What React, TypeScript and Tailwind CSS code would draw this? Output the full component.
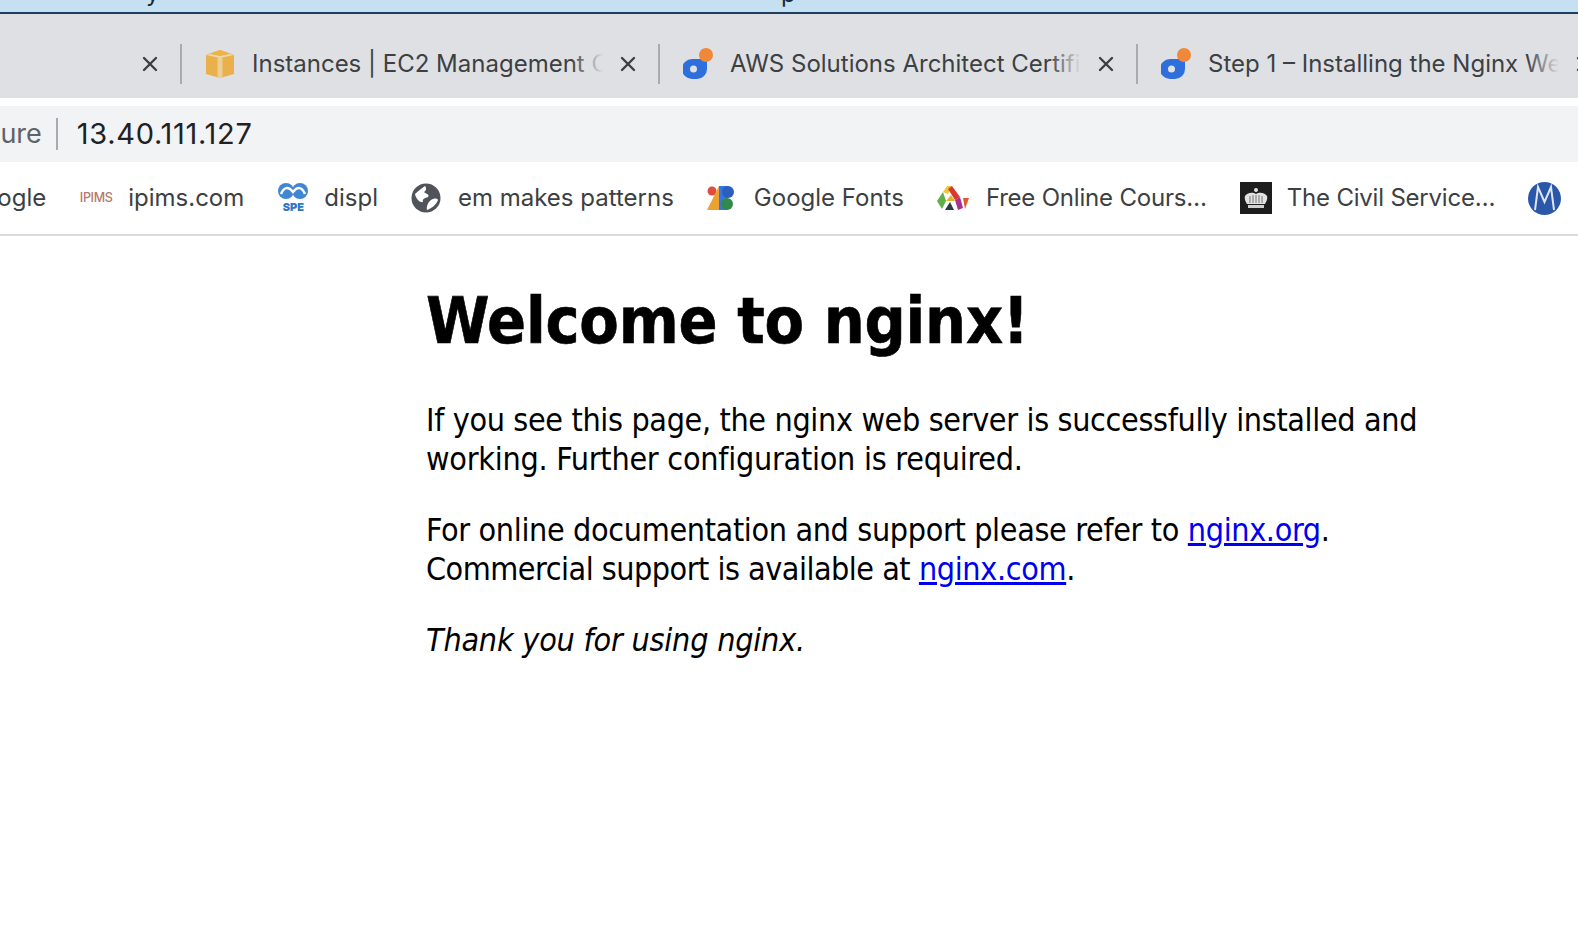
import { X } from "lucide-react";
import type { ReactNode } from "react";

const chrome = "font-['Inter','Liberation_Sans',sans-serif]";

function CubeIcon() {
  return (
    <svg width="30" height="30" viewBox="0 0 30 30">
      <path d="M1 6 L9 3 L15 1 L21 3 L29 6 L29 25 L15 29 L1 25 Z" fill="#e9b04c" />
      <path d="M1 6 L15 9 L29 6 L25 5 L15 7 L5 5 Z" fill="#efd9a8" />
      <path d="M12.5 9 H17.5 V29 H12.5 Z" fill="#eccf95" />
      <path d="M7 4 L15 1 L23 4 L15 6 Z" fill="#eeb546" />
    </svg>
  );
}

function DoIcon() {
  return (
    <svg width="32" height="32" viewBox="1 0 32 32">
      <path d="M10 11 H25 V21 A10 10 0 0 1 15 31 H10 A10 10 0 0 1 10 11 Z" fill="#2f6fdc" />
      <circle cx="11.5" cy="21" r="3.5" fill="#e0e1e5" />
      <circle cx="24" cy="7" r="7" fill="#f0883a" />
    </svg>
  );
}

function GlobeIcon() {
  return (
    <svg width="32" height="30" viewBox="0 0 32 30">
      <circle cx="15" cy="15" r="14.5" fill="#50535a" />
      <path d="M4 11 C7 8 10 6 14 3 C16 5 15 8 13 9 C15 11 19 11 17 14 C14 15 11 16 12 19 C9 20 5 16 4 11 Z" fill="#fff" />
      <path d="M20 17 C23 15 26 15 27 17 C25 22 21 25 16 27 C15 24 17 19 20 17 Z" fill="#fff" />
    </svg>
  );
}

function IpimsIcon() {
  return (
    <div className="flex h-8 w-[34px] items-center justify-center text-[12.5px] font-medium tracking-[-0.3px] text-[#b5776c]">
      IPIMS
    </div>
  );
}

function SpeIcon() {
  return (
    <div className="flex h-8 w-8 flex-col items-center">
      <svg width="30" height="19" viewBox="0 0 30 19">
        <circle cx="8" cy="9" r="8" fill="#3f86d3" />
        <circle cx="22" cy="9" r="8" fill="#3f86d3" />
        <path d="M3 12 C6 5 10 4 15 10 C20 4 24 5 27 12" fill="none" stroke="#fff" strokeWidth="2.5" />
      </svg>
      <span className="text-[11px] leading-[12px] font-black text-[#2f78c8]">SPE</span>
    </div>
  );
}

function GoogleFontsIcon() {
  return (
    <svg width="32" height="24" viewBox="0 0 32 24">
      <circle cx="5" cy="5" r="4.5" fill="#e04c3f" />
      <path d="M0 24 L12 0 V24 Z" fill="#eba233" />
      <path d="M12 0 H20 V24 H12 Z" fill="#3178e6" />
      <path d="M20 0 H21 A6 6 0 0 1 21 12 H20 Z" fill="#2c5fbd" />
      <path d="M20 0 V12 A6 6 0 0 1 15 6 A6 6 0 0 1 20 0 Z" fill="#2c5fbd" />
      <circle cx="20" cy="18" r="6" fill="#2f8a4c" />
    </svg>
  );
}

function FreeCourseIcon() {
  return (
    <svg width="34" height="24" viewBox="0 0 34 24">
      <path d="M0 15 L6 6 L9 15 L5 23 Z" fill="#5fb04b" />
      <path d="M6 6 L10 0 H15 L11 8 Z" fill="#efc53a" />
      <path d="M15 0 L23 11 L18 14 L11 3 Z" fill="#d83a32" />
      <path d="M18 14 L23 11 L26 22 L21 24 Z" fill="#a8338c" />
      <path d="M26 12 H32 L28 23 Z" fill="#e2592c" />
      <path d="M9 15 L14 9 L18 15 Z" fill="#e7b32f" />
      <path d="M8 24 L13 16 L17 24 Z" fill="#2b3a44" />
    </svg>
  );
}

function CrownIcon() {
  return (
    <svg width="32" height="32" viewBox="0 0 32 32">
      <rect width="32" height="32" fill="#1d1d1d" />
      <path d="M5 14 C8 10 13 10 16 12 C19 10 24 10 27 14 C28 17 26 20 25 22 H7 C6 20 4 17 5 14 Z" fill="#e2e2e2" />
      <circle cx="16" cy="8" r="2" fill="#e2e2e2" />
      <path d="M10 14 V21 M13 13 V21 M16 13 V21 M19 13 V21 M22 14 V21" stroke="#777" strokeWidth="1" />
      <rect x="8" y="23" width="16" height="3" fill="#d0d0d0" />
    </svg>
  );
}

function MIcon() {
  return (
    <svg width="33" height="33" viewBox="0 0 33 33">
      <circle cx="16.5" cy="16.5" r="16.5" fill="#2a57a8" />
      <path d="M7 28 L10 5 L16.5 20 L23 5 L26 28" fill="none" stroke="#dfe6f2" strokeWidth="2" />
    </svg>
  );
}

function Tab({ icon, title }: { icon?: ReactNode; title?: string }) {
  return (
    <div className="flex h-10 w-[478px] shrink-0 items-center border-r-2 border-[#a9abb0] pl-[23px]">
      <div className="flex h-8 w-[32px] shrink-0 items-center">{icon}</div>
      <div className="relative ml-[15px] min-w-0 flex-1 overflow-hidden whitespace-nowrap">
        <span className="text-[24px] text-[#3c4043]">{title}</span>
        <div className="absolute inset-y-0 right-0 w-8 bg-gradient-to-r from-transparent to-[#dfe0e4]" />
      </div>
      <X size={24} strokeWidth={2.4} className="mr-[18px] ml-[13px] shrink-0 text-[#3c4043]" />
    </div>
  );
}

function Bookmark({ icon, label, tight }: { icon: ReactNode; label: string; tight?: boolean }) {
  return (
    <div className="flex shrink-0 items-center gap-[15px]">
      {icon}
      <span className={`text-[24px] whitespace-nowrap text-[#3c4043] ${tight ? "tracking-[-0.2px]" : ""}`}>{label}</span>
    </div>
  );
}

export default function App() {
  return (
    <div className={`min-h-[950px] overflow-hidden bg-white ${chrome}`}>
      <div className="relative h-[14px] overflow-hidden border-b-2 border-[#1f3f5f] bg-[#c5e0f1]">
        <span className="absolute top-[-25px] left-[146px] text-[24px] text-[#1a2a3a]">y</span>
        <span className="absolute top-[-24px] left-[781px] text-[24px] text-[#1a2a3a]">p</span>
      </div>

      <div className="flex h-[84px] items-center bg-[#dfe0e4] pt-[16px]">
        <div className="ml-[-296px] flex">
          <Tab />
          <Tab icon={<CubeIcon />} title="Instances | EC2 Management Console" />
          <Tab icon={<DoIcon />} title="AWS Solutions Architect Certification" />
          <Tab icon={<DoIcon />} title="Step 1 – Installing the Nginx Web Server" />
        </div>
      </div>

      <div className="mt-[8px] flex h-[56px] items-center bg-[#f1f3f4]">
        <span className="ml-[-98px] text-[27px] text-[#5f6368]">Not secure</span>
        <div className="ml-[14px] h-8 w-[2px] bg-[#a9abb0]" />
        <span className="ml-[19px] text-[29px] tracking-[0.7px] text-[#202124]">13.40.111.127</span>
      </div>

      <div className="flex h-[74px] items-center gap-[33px] border-b-2 border-[#dadada]">
        <span className="ml-[-35px] text-[24px] text-[#3c4043]">Google</span>
        <Bookmark icon={<IpimsIcon />} label="ipims.com" />
        <Bookmark icon={<SpeIcon />} label="displ" />
        <Bookmark icon={<GlobeIcon />} label="em makes patterns" />
        <Bookmark icon={<GoogleFontsIcon />} label="Google Fonts" />
        <Bookmark icon={<FreeCourseIcon />} label="Free Online Cours…" tight />
        <Bookmark icon={<CrownIcon />} label="The Civil Service…" tight />
        <MIcon />
      </div>

      <main className="ml-[426px] w-[1120px] pt-[47px] font-['DejaVu_Sans',sans-serif] text-[32px] leading-[39px] tracking-[-0.35px] text-black [font-stretch:condensed]">
        <h1 className="mb-[41px] text-[64px] leading-[77px] font-bold tracking-[-0.2px] [-webkit-text-stroke:0.6px_black]">Welcome to nginx!</h1>
        <p>
          If you see this page, the nginx web server is successfully installed and{" "}
          <span className="tracking-[-0.25px]">working. Further configuration is required.</span>
        </p>
        <p className="mt-[32px]">
          For online documentation and support please refer to{" "}
          <a href="#" className="text-[#0000ee] underline">nginx.org</a>.
          <br />
          <span className="tracking-[-0.5px]">Commercial support is available at</span>{" "}
          <a href="#" className="text-[#0000ee] underline">nginx.com</a>.
        </p>
        <p className="mt-[32px] tracking-[-0.2px] italic">Thank you for using nginx.</p>
      </main>
    </div>
  );
}
